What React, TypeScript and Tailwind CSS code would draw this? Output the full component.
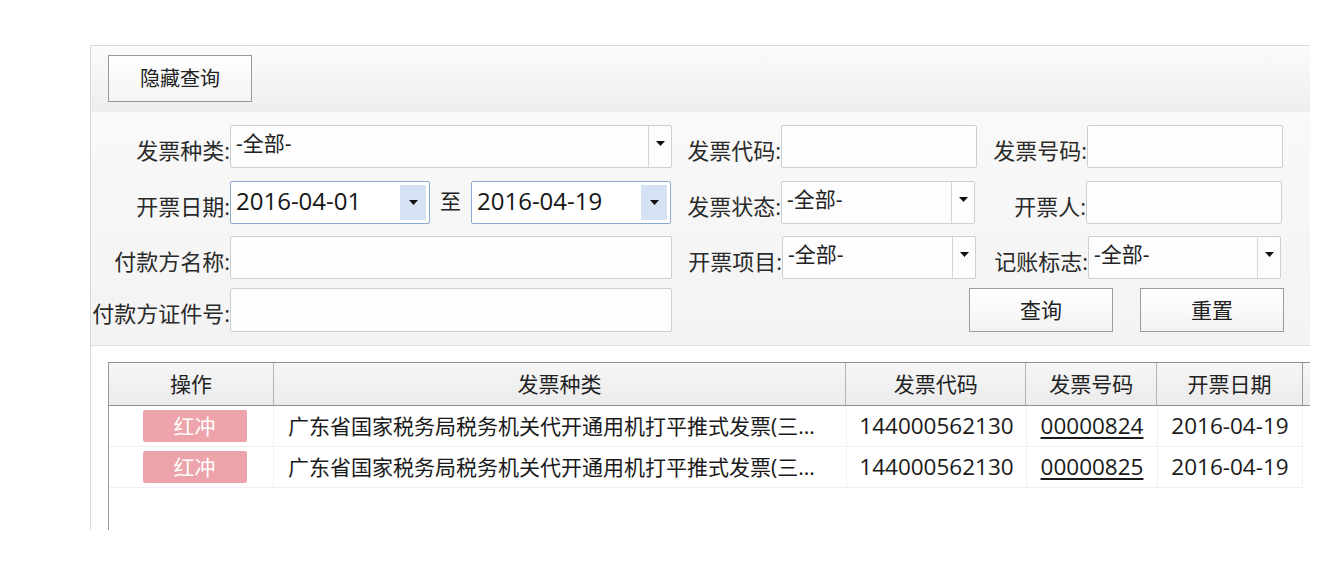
import React from "react";

const FONT = { fontFamily: '"Open Sans", "Noto Sans CJK SC", "Noto Sans", sans-serif' };

function Arrow() {
  return (
    <svg width="9" height="5" viewBox="0 0 9 5" className="block">
      <path d="M0 0 H9 L4.5 5 Z" fill="#111" />
    </svg>
  );
}

function Label({ text, w }: { text: string; w: string }) {
  return (
    <div className={`${w} shrink-0 flex items-center justify-end pt-[6px] text-[22px] text-[#2a2a2a] leading-none whitespace-nowrap`}>
      {text}
    </div>
  );
}

function TextBox({ w }: { w: string }) {
  return <div className={`${w} h-full shrink-0 bg-[#fdfdfd] border border-[#cfcfcf] rounded-[2px]`} />;
}

function Select({ w }: { w: string }) {
  return (
    <div className={`${w} h-full shrink-0 bg-[#fdfdfd] border border-[#cfcfcf] rounded-[2px] flex`}>
      <div className="flex-1 flex items-center pl-[5px] text-[21px] text-[#222] leading-none pb-[6px] whitespace-nowrap">-全部-</div>
      <div className="w-[23px] border-l border-[#d6d6d6] flex justify-center pt-[15px]">
        <Arrow />
      </div>
    </div>
  );
}

function DateBox({ value }: { value: string }) {
  return (
    <div className="w-[200px] h-full shrink-0 bg-white border border-[#8ea9cf] rounded-[2px] flex items-center p-[3px]">
      <div className="flex-1 pl-[2px] text-[24px] text-[#151515] leading-none pb-[3px]">{value}</div>
      <div className="w-[26px] h-full bg-[#d4e2f4] flex items-center justify-center">
        <Arrow />
      </div>
    </div>
  );
}

function Btn({ text, w }: { text: string; w: string }) {
  return (
    <div className={`${w} h-full shrink-0 border border-[#9c9c9c] bg-gradient-to-b from-[#ffffff] to-[#f3f3f3] flex items-center justify-center text-[21px] text-[#222] leading-none`}>
      {text}
    </div>
  );
}

const rows = [
  { code: "144000562130", no: "00000824", date: "2016-04-19" },
  { code: "144000562130", no: "00000825", date: "2016-04-19" },
];

export default function App() {
  return (
    <div className="w-[1330px] h-[584px] bg-white pt-[45px] pl-[90px] overflow-hidden" style={FONT}>
      <div className="w-[1220px] h-[485px] border-l border-t border-[#d9d9d9] flex flex-col">
        {/* toolbar */}
        <div className="h-[65px] shrink-0 bg-gradient-to-b from-[#fbfbfb] to-[#eeeeee] pl-[17px] pt-[9px]">
          <div className="w-[144px] h-[47px] border border-[#9a9a9a] bg-gradient-to-b from-[#ffffff] to-[#f4f4f4] flex items-center justify-center text-[20px] text-[#222] leading-none">
            隐藏查询
          </div>
        </div>

        {/* form */}
        <div className="h-[235px] shrink-0 bg-gradient-to-b from-[#f9f9f9] to-[#f3f3f3] border-b border-[#dcdcdc] border-t border-t-[#f2f2f2] pt-[13px] flex flex-col">
          <div className="h-[43px] flex">
            <Label text="发票种类:" w="w-[139px]" />
            <Select w="w-[442px]" />
            <Label text="发票代码:" w="w-[109px]" />
            <TextBox w="w-[196px]" />
            <Label text="发票号码:" w="w-[110px]" />
            <TextBox w="w-[196px]" />
          </div>
          <div className="h-[43px] mt-[13px] flex">
            <Label text="开票日期:" w="w-[139px]" />
            <DateBox value="2016-04-01" />
            <div className="w-[41px] shrink-0 flex items-center justify-center text-[21px] text-[#222] pb-[2px]">至</div>
            <DateBox value="2016-04-19" />
            <Label text="发票状态:" w="w-[110px]" />
            <Select w="w-[194px]" />
            <Label text="开票人:" w="w-[111px]" />
            <TextBox w="w-[196px]" />
          </div>
          <div className="h-[43px] mt-[12px] flex">
            <Label text="付款方名称:" w="w-[139px]" />
            <TextBox w="w-[442px]" />
            <Label text="开票项目:" w="w-[110px]" />
            <Select w="w-[194px]" />
            <Label text="记账标志:" w="w-[112px]" />
            <Select w="w-[193px]" />
          </div>
          <div className="h-[44px] mt-[9px] flex">
            <Label text="付款方证件号:" w="w-[139px]" />
            <TextBox w="w-[442px]" />
            <div className="w-[297px] shrink-0" />
            <Btn text="查询" w="w-[144px]" />
            <div className="w-[27px] shrink-0" />
            <Btn text="重置" w="w-[144px]" />
          </div>
        </div>

        {/* table */}
        <div className="flex-1 bg-white pl-[17px] pt-[16px] flex flex-col">
          <div className="flex-1 border-l border-[#9a9a9a] flex flex-col">
            <div className="h-[44px] flex border-t border-b border-[#8f8f8f] bg-gradient-to-b from-[#f6f6f6] to-[#ebebeb] text-[21px] text-[#222] leading-none">
              <div className="w-[164px] flex items-center justify-center">操作</div>
              <div className="w-[573px] border-l border-[#b5b5b5] flex items-center justify-center">发票种类</div>
              <div className="w-[180px] border-l border-[#b5b5b5] flex items-center justify-center">发票代码</div>
              <div className="w-[131px] border-l border-[#b5b5b5] flex items-center justify-center">发票号码</div>
              <div className="w-[146px] border-l border-[#b5b5b5] flex items-center justify-center">开票日期</div>
              <div className="w-[8px] border-l border-[#9a9a9a]" />
            </div>
            {rows.map((r, i) => (
              <div key={i} className="h-[41px] w-[1194px] flex border-b border-[#efefef] text-[21px] text-[#1a1a1a] leading-none">
                <div className="w-[164px] flex items-center justify-center pl-[7px]">
                  <div className="w-[104px] h-[32px] rounded-[2px] bg-[#eca3a9] text-white text-[21px] flex items-center justify-center">红冲</div>
                </div>
                <div className="w-[573px] border-l border-[#f1f1f1] flex items-center pl-[14px] whitespace-nowrap">
                  广东省国家税务局税务机关代开通用机打平推式发票(三...
                </div>
                <div className="w-[180px] border-l border-[#f1f1f1] flex items-center justify-center text-[22.5px]">{r.code}</div>
                <div className="w-[131px] border-l border-[#f1f1f1] flex items-center justify-center text-[22.5px]">
                  <span className="underline underline-offset-[3px]">{r.no}</span>
                </div>
                <div className="w-[146px] border-l border-[#f1f1f1] border-r flex items-center justify-center text-[22.5px]">{r.date}</div>
              </div>
            ))}
          </div>
        </div>
      </div>
    </div>
  );
}
